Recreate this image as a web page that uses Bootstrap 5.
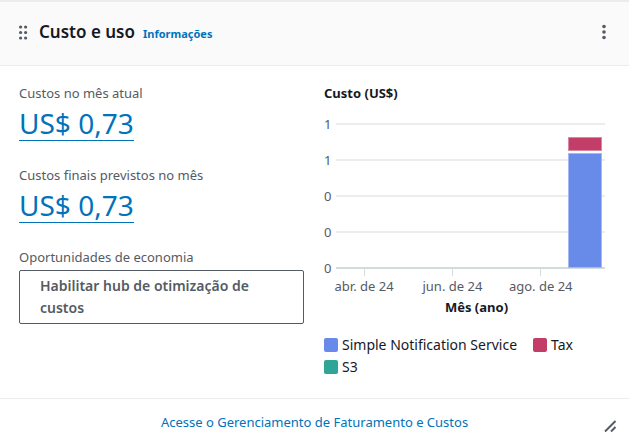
<!DOCTYPE html>
<html lang="pt-BR">
<head>
<meta charset="utf-8">
<meta name="viewport" content="width=device-width, initial-scale=1">
<title>Custo e uso</title>
<link href="https://cdn.jsdelivr.net/npm/bootstrap@5.3.0/dist/css/bootstrap.min.css" rel="stylesheet">
<style>
  body { font-family: "Noto Sans", "Open Sans", sans-serif; font-size: 13px; line-height: 22px; color: #16191f; background: #fff; }
  a { color: #0073bb; text-decoration: none; }
  .widget { border-top: 2px solid #eaeded; }
  .widget-head { background: #fafafa; border-bottom: 1px solid #eaeded; padding: 15px 19px 18px; }
  .widget-head h2 { font-size: 17px; line-height: 30px; font-weight: 600; margin-left: 11px; }
  .info-link { font-size: 11px; font-weight: 700; padding-top: 3px; }
  .icon-btn { color: #545b64; line-height: 0; }
  .widget-body { display: grid; grid-template-columns: 1fr 1fr; gap: 20px; padding: 16px 20px 20px 19px; }
  .muted { color: #545b64; }
  .amount { font-size: 28px; line-height: 34px; padding-top: 2px; border-bottom: 1px solid #0073bb; }
  .metric { margin-bottom: 23px; }
  .hub-btn { border: 1px solid #545b64; border-radius: 2px; color: #545b64; font-size: 14px; font-weight: 600; line-height: 22px; padding: 4px 20px; margin-top: 2px; }
  .hub-btn:hover { color: #16191f; background: #fafafa; border-color: #16191f; }
  .axis-title { font-weight: 700; }
  .chart { padding-right: 4px; margin-top: 9px; }
  .plot { display: grid; }
  .plot > div { grid-area: 1 / 1; }
  .tick-row { height: 22px; margin-bottom: 14px; gap: 4px; }
  .tick-row:last-child { margin-bottom: 0; }
  .tick-row span { width: 8px; }
  .tick-row i { flex: 1; height: 2px; background: #eaeded; }
  .tick-row:last-child i { background: #d5dbdb; }
  .months { display: grid; grid-template-columns: repeat(6, 1fr); margin-left: 18px; margin-right: -2px; }
  .bars { padding: 11px 0; z-index: 1; }
  .stack { grid-column: 6; gap: 2px; width: 78%; }
  .seg { border: 1px solid; }
  .seg-tax { height: 14px; background: #c33d69; border-color: #d987a2; }
  .seg-sns { height: 115px; background: #688ae8; border-color: #a4b9f1; }
  .month { min-width: 0; line-height: 20px; }
  .month::before { content: ""; width: 1px; height: 7px; background: #d5dbdb; }
  .month-blank::before { background: none; }
  .months-row { margin-top: -10px; }
  .month span { white-space: nowrap; }
  .legend-list { font-size: 14px; column-gap: 16px; margin-top: 16px; }
  .swatch { width: 14px; height: 14px; border-radius: 2px; }
  .c-sns { background: #688ae8; } .c-tax { background: #c33d69; } .c-s3 { background: #2ea597; }
  .widget-foot { border-top: 1px solid #eaeded; padding: 12px 12px 11px; display: grid; grid-template-columns: 14px 1fr 14px; }
  .foot-link { grid-column: 2; }
</style>
</head>
<body>
<section class="widget">
  <header class="widget-head d-flex align-items-center">
    <button type="button" class="icon-btn btn p-0 border-0" aria-label="Mover widget">
      <svg width="9" height="16" viewBox="0 0 9 16" fill="currentColor"><circle cx="1.6" cy="3" r="1.6"/><circle cx="6.600" cy="3" r="1.6"/><circle cx="1.6" cy="8.5" r="1.6"/><circle cx="6.600" cy="8.5" r="1.6"/><circle cx="1.6" cy="14" r="1.6"/><circle cx="6.600" cy="14" r="1.6"/></svg>
    </button>
    <h2 class="mb-0">Custo e uso</h2>
    <a href="#" class="info-link ms-2">Informações</a>
    <button type="button" class="icon-btn btn p-0 border-0 ms-auto me-1" aria-label="Ações">
      <svg width="4" height="16" viewBox="0 0 4 16" fill="currentColor"><circle cx="2" cy="2.5" r="1.8"/><circle cx="2" cy="8" r="1.8"/><circle cx="2" cy="13.5" r="1.8"/></svg>
    </button>
  </header>

  <div class="widget-body">
    <div>
      <div class="metric">
        <div class="muted">Custos no mês atual</div>
        <a href="#" class="amount d-inline-block">US$ 0,73</a>
      </div>
      <div class="metric">
        <div class="muted">Custos finais previstos no mês</div>
        <a href="#" class="amount d-inline-block">US$ 0,73</a>
      </div>
      <div class="muted">Oportunidades de economia</div>
      <button type="button" class="hub-btn btn w-100 text-start">Habilitar hub de otimização de custos</button>
    </div>

    <div>
      <div class="axis-title">Custo (US$)</div>
      <div class="chart">
        <div class="plot">
          <div>
            <div class="tick-row d-flex align-items-center muted"><span>1</span><i></i></div>
            <div class="tick-row d-flex align-items-center muted"><span>1</span><i></i></div>
            <div class="tick-row d-flex align-items-center muted"><span>0</span><i></i></div>
            <div class="tick-row d-flex align-items-center muted"><span>0</span><i></i></div>
            <div class="tick-row d-flex align-items-center muted"><span>0</span><i></i></div>
          </div>
          <div class="bars months align-items-end">
            <div class="stack d-flex flex-column mx-auto">
              <div class="seg seg-tax"></div>
              <div class="seg seg-sns"></div>
            </div>
          </div>
        </div>
        <div class="months months-row muted">
          <div class="month d-flex flex-column align-items-center"><span>abr. de 24</span></div>
          <div class="month month-blank"></div>
          <div class="month d-flex flex-column align-items-center"><span>jun. de 24</span></div>
          <div class="month month-blank"></div>
          <div class="month d-flex flex-column align-items-center"><span>ago. de 24</span></div>
          <div class="month month-blank"></div>
        </div>
        <div class="axis-title text-center ms-4">Mês (ano)</div>
      </div>
      <div class="legend-list d-flex flex-wrap">
        <div class="d-flex align-items-center gap-1"><span class="swatch c-sns"></span>Simple Notification Service</div>
        <div class="d-flex align-items-center gap-1"><span class="swatch c-tax"></span>Tax</div>
        <div class="d-flex align-items-center gap-1"><span class="swatch c-s3"></span>S3</div>
      </div>
    </div>
  </div>

  <footer class="widget-foot">
    <a href="#" class="foot-link text-center">Acesse o Gerenciamento de Faturamento e Custos</a>
    <button type="button" class="icon-btn btn p-0 border-0 align-self-end" aria-label="Redimensionar widget">
      <svg width="14" height="14" viewBox="0 0 14 14" fill="none" stroke="currentColor" stroke-width="2"><path d="M2 12.500 12.500 2M8 12.500 12.500 8"/></svg>
    </button>
  </footer>
</section>
<script src="https://cdn.jsdelivr.net/npm/bootstrap@5.3.0/dist/js/bootstrap.bundle.min.js"></script>
</body>
</html>
